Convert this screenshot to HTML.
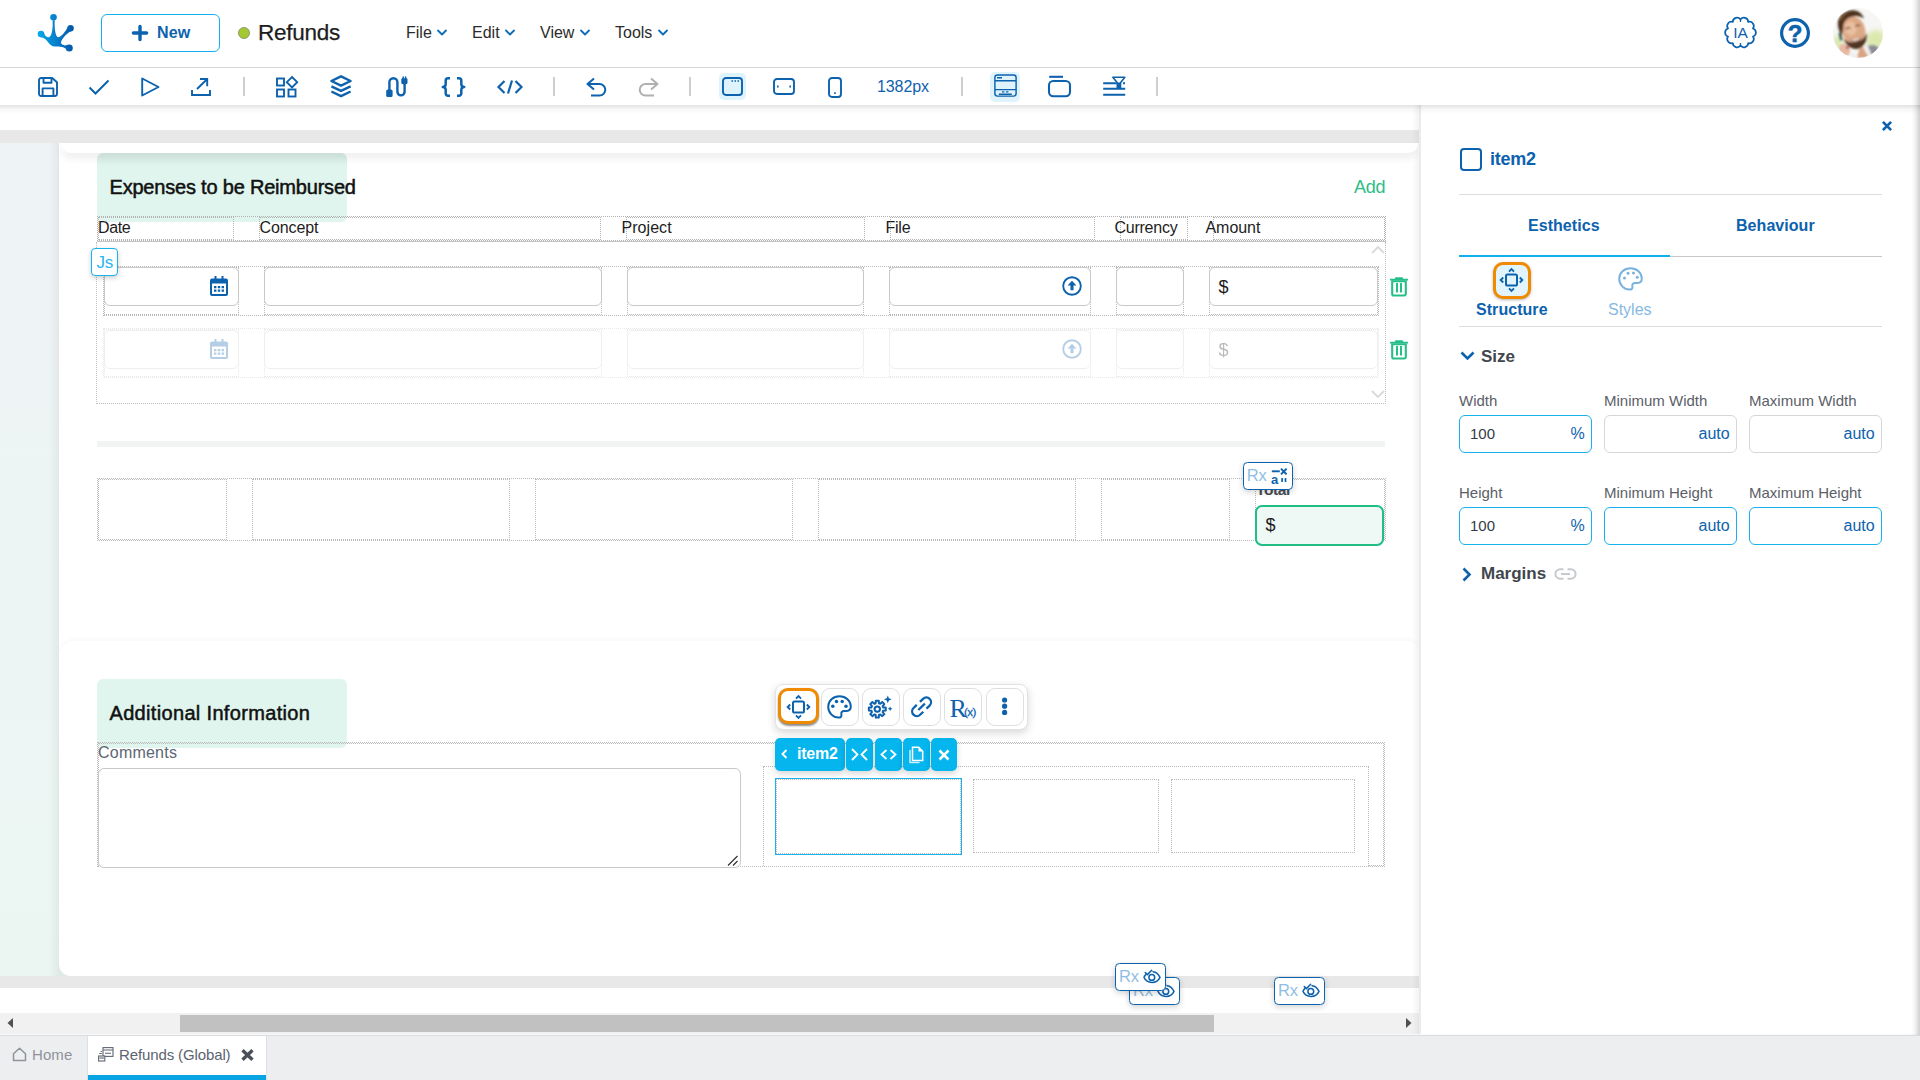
<!DOCTYPE html>
<html lang="en">
<head>
<meta charset="utf-8">
<title>Refunds</title>
<style>
*{box-sizing:border-box;margin:0;padding:0}
html,body{width:1920px;height:1080px;overflow:hidden;background:#fff}
body{font-family:"Liberation Sans",sans-serif;color:#222;position:relative}
.abs{position:absolute}
svg{display:block;position:absolute;overflow:visible}
.t{position:absolute;white-space:nowrap;line-height:1}
/* ---------- header ---------- */
#hdr{left:0;top:0;width:1920px;height:68px;background:#fff;border-bottom:1px solid #d3d8dd}
#newbtn{left:101px;top:14px;width:119px;height:38px;border:1px solid #12b0ee;border-radius:6px;background:#fff}
.menu{font-size:16px;color:#2b2b2b;top:25px}
/* ---------- toolbar ---------- */
#tb{left:0;top:68px;width:1920px;height:37px;background:#fff}
#tbshadow{z-index:5;left:0;top:105px;width:1920px;height:9px;background:linear-gradient(rgba(0,0,0,.115),rgba(0,0,0,.035) 45%,rgba(0,0,0,0))}
.sep{width:2px;height:19px;top:77px;background:#cfcfcf}
/* ---------- canvas ---------- */
#canvas{left:0;top:105px;width:1419px;height:929px;overflow:hidden}
.dot{position:absolute;border:1px dotted #b9b9b9}
.inp{position:absolute;border:1px solid #c9c9c9;border-radius:6px;background:#fff}
.h16{font-size:16px;color:#1d1d1d}
.rx{width:51px;height:28px;border:1.300px solid #0d62ae;border-radius:4.500px;background:#fff;box-shadow:0 2px 6px rgba(0,0,0,.18)}
.rxt{font-size:16.500px;color:#8fbee4;letter-spacing:-.2px}
.bb{top:738px;height:33px;background:#05b5ee;border-radius:5px;box-shadow:0 3px 6px rgba(0,0,0,.16)}
.fb{top:687.500px;width:37.500px;height:38px;border:1.200px solid #dddfe2;border-radius:9px;background:#fff}
/* ---------- panel ---------- */
#panel{left:1420px;top:105px;width:500px;height:930px;background:#fff}
.pl{font-size:15px;color:#5b6068}
.pin{position:absolute;height:38px;width:132.600px;border-radius:6px;background:#fff;border:1px solid #d6d6d6}
.pin.on{border:1.300px solid #17b1ee}
.auto{font-size:16px;color:#0d62ae}
/* ---------- bottom ---------- */
#bot{left:0;top:1035px;width:1920px;height:45px;background:#edeef0;border-top:1px solid #d9dcdf}
</style>
</head>
<body>
<div id="hdr" class="abs">
  <svg style="left:30px;top:8px" width="54" height="50" viewBox="0 0 54 50">
    <defs><linearGradient id="lg" x1="8" y1="0" x2="43" y2="0" gradientUnits="userSpaceOnUse"><stop offset="0" stop-color="#04aaeb"/><stop offset=".5" stop-color="#0580cb"/><stop offset="1" stop-color="#0458a8"/></linearGradient></defs>
    <g fill="url(#lg)">
      <circle cx="23.5" cy="9.3" r="3.3"/><circle cx="40.6" cy="20.3" r="3.2"/><circle cx="11" cy="26" r="3.3"/><circle cx="39.3" cy="40" r="3.5"/>
      <path d="M13.6 24.2C15 28 17 29.6 19 29.2C22 28.4 23 20 22.6 12.2L24.8 12.2C24.2 20 25.5 29 28 29.2C31 29.3 35 24 38.4 18.2L41.5 23C36 25.5 31 32 31 34.6C31.2 37 35 38.2 37.5 36.8L37.5 42.8C35 38.8 30 38.6 25 38.6C18.5 38.5 17.5 29.5 10.5 29.2Z"/>
    </g>
  </svg>
  <div id="newbtn" class="abs"></div>
  <svg style="left:132px;top:25px" width="16" height="16" viewBox="0 0 16 16"><path d="M8 1.4v13.2M1.4 8h13.2" stroke="#0d62ae" stroke-width="3.400" stroke-linecap="round" fill="none"/></svg>
  <div class="t" style="left:157px;top:25px;font-size:16px;font-weight:700;color:#0d62ae;letter-spacing:.2px">New</div>
  <div class="abs" style="left:238px;top:27px;width:12px;height:12px;border-radius:50%;background:#a3c830;border:1px solid #8e9a6e"></div>
  <div class="t" style="left:258px;top:21.5px;font-size:22.5px;color:#1d1d1d;letter-spacing:-.25px;-webkit-text-stroke:.25px #1d1d1d">Refunds</div>
  <div class="t menu" style="left:406px">File</div>
  <div class="t menu" style="left:472px">Edit</div>
  <div class="t menu" style="left:540px">View</div>
  <div class="t menu" style="left:615px">Tools</div>
  <svg style="left:437px;top:29px" width="10" height="8" viewBox="0 0 10 8"><path d="M1 1.5l4 4 4-4" stroke="#0d6cb8" stroke-width="1.8" fill="none" stroke-linecap="round" stroke-linejoin="round"/></svg>
  <svg style="left:505px;top:29px" width="10" height="8" viewBox="0 0 10 8"><path d="M1 1.5l4 4 4-4" stroke="#0d6cb8" stroke-width="1.8" fill="none" stroke-linecap="round" stroke-linejoin="round"/></svg>
  <svg style="left:580px;top:29px" width="10" height="8" viewBox="0 0 10 8"><path d="M1 1.5l4 4 4-4" stroke="#0d6cb8" stroke-width="1.8" fill="none" stroke-linecap="round" stroke-linejoin="round"/></svg>
  <svg style="left:658px;top:29px" width="10" height="8" viewBox="0 0 10 8"><path d="M1 1.5l4 4 4-4" stroke="#0d6cb8" stroke-width="1.8" fill="none" stroke-linecap="round" stroke-linejoin="round"/></svg>
  <!-- right icons -->
  <svg id="iaicon" style="left:1724px;top:16px" width="33" height="33" viewBox="0 0 33 33"><path d="M16.50 3.40A4.26 4.26 0 0 1 24.20 5.90A4.26 4.26 0 0 1 28.96 12.45A4.26 4.26 0 0 1 28.96 20.55A4.26 4.26 0 0 1 24.20 27.10A4.26 4.26 0 0 1 16.50 29.60A4.26 4.26 0 0 1 8.80 27.10A4.26 4.26 0 0 1 4.04 20.55A4.26 4.26 0 0 1 4.04 12.45A4.26 4.26 0 0 1 8.80 5.90A4.26 4.26 0 0 1 16.50 3.40Z" fill="#fff" stroke="#0d62ae" stroke-width="1.7" stroke-linejoin="round"/><path d="M16.5 3.4v2.6M16.5 29.6v-2.600" stroke="#0d62ae" stroke-width="1.300"/><text x="16.5" y="21.800" text-anchor="middle" font-family="Liberation Sans, sans-serif" font-size="15.500" fill="#0d62ae">IA</text></svg>
  <svg style="left:1779px;top:17px" width="32" height="32" viewBox="0 0 32 32"><circle cx="16" cy="16" r="13.4" fill="none" stroke="#0d62ae" stroke-width="3.200"/><text x="16" y="24.600" text-anchor="middle" font-family="Liberation Sans, sans-serif" font-weight="700" font-size="24" fill="#0d62ae" stroke="#0d62ae" stroke-width=".6">?</text></svg>
  <svg id="avatar" style="left:1833px;top:8px" width="50" height="50" viewBox="0 0 50 50">
    <defs><clipPath id="avc"><circle cx="25" cy="25" r="25"/></clipPath><filter id="avb" x="-20%" y="-20%" width="140%" height="140%"><feGaussianBlur stdDeviation="1"/></filter><filter id="avb2" x="-30%" y="-30%" width="160%" height="160%"><feGaussianBlur stdDeviation="2.400"/></filter></defs>
    <g clip-path="url(#avc)">
      <rect width="50" height="50" fill="#f6f6f5"/>
      <g filter="url(#avb2)"><ellipse cx="43" cy="32" rx="10" ry="10" fill="#dbe8ab"/><ellipse cx="38" cy="40" rx="8" ry="6" fill="#e0ebb8"/><ellipse cx="4" cy="35" rx="6" ry="7" fill="#dbe8ae"/></g>
      <g filter="url(#avb)">
        <path d="M24 50L27 38l9 2 6 10z" fill="#d9a482"/>
        <path d="M33 38l8-1 9 5v8H38z" fill="#8b8c96"/>
        <path d="M30 39l4-3 5 12-3 2z" fill="#f3f0ef"/>
        <path d="M17 50l3-6 5 6z" fill="#f1eeee"/>
        <g transform="rotate(-14 20 22)">
          <ellipse cx="20.500" cy="23" rx="11.500" ry="15" fill="#dca986"/>
          <ellipse cx="18" cy="20" rx="6" ry="7" fill="#e9bf9f"/>
          <path d="M8.500 28c1 8 6 13.500 12 13.500s11-5.500 12-13.500c-3 5-7 6.500-12 6.500s-9-1.500-12-6.500z" fill="#4d3424"/>
          <path d="M14.500 30.500c2 1.400 10 1.400 12 0-1 3-3.500 4.200-6 4.200s-5-1.200-6-4.200z" fill="#7a4b38"/>
          <path d="M15.500 30.800c2 .9 8 .9 10 0-1 1.700-2.800 2.300-5 2.300s-4-.600-5-2.300z" fill="#f4ebe6"/>
          <path d="M13 19.500c1.500-1.200 3.500-1.200 5 0M23 19.500c1.500-1.200 3.500-1.200 5 0" stroke="#5b3b28" stroke-width="1.300" fill="none"/>
          <path d="M7.500 25C4 13 8 3.500 19 2.500c8-.7 13.500 3.500 14.500 11-3.500-4-7.500-5.200-12.500-4.700-5.500.5-9 3.700-10 9.200z" fill="#4d321f"/>
          <path d="M9 8.500c3-4 9-5.500 14-4.500-5 0-9 2-11.500 5.500z" fill="#7d5434"/>
        </g>
        <rect x="6.200" y="24.500" width="2.600" height="8" rx="1" transform="rotate(-12 7.500 28)" fill="#2d5a4c"/>
        <ellipse cx="11.500" cy="42" rx="5.500" ry="6.500" transform="rotate(-25 11.500 42)" fill="#e7b9a2"/>
        <ellipse cx="14.500" cy="39.500" rx="1.300" ry="1.700" fill="#b4524c"/>
      </g>
    </g>
  </svg>
</div>

<div id="tb" class="abs"></div>
<div id="tbshadow" class="abs"></div>
<div id="tbicons">
  <!-- save -->
  <svg style="left:38px;top:77px" width="20" height="20" viewBox="0 0 20 20" fill="none" stroke="#0d62ae" stroke-width="1.900" stroke-linejoin="round"><path d="M1 3.200a2.200 2.200 0 0 1 2.200-2.200h11l4.800 4.200v11.600a2.200 2.200 0 0 1-2.200 2.200h-13.600a2.200 2.200 0 0 1-2.200-2.200z"/><path d="M5.500 1.200v4.600h8v-4.600M4.600 18.800v-7.400h10.800v7.400"/></svg>
  <!-- check -->
  <svg style="left:88px;top:79px" width="22" height="16" viewBox="0 0 22 16" fill="none" stroke="#0d62ae" stroke-width="2"><path d="M1.500 8.500l6 6L20.500 1.500"/></svg>
  <!-- play -->
  <svg style="left:141px;top:77px" width="19" height="20" viewBox="0 0 19 20" fill="none" stroke="#0d62ae" stroke-width="1.900" stroke-linejoin="round"><path d="M1.200 1.500L17.500 10 1.200 18.500z"/></svg>
  <!-- export -->
  <svg style="left:191px;top:78px" width="20" height="18" viewBox="0 0 20 18" fill="none" stroke="#0d62ae" stroke-width="1.900"><path d="M1 12v5h18v-5M6 11L16 1.200M9 1h7.200v7.200"/></svg>
  <div class="abs sep" style="left:243px"></div>
  <!-- widgets -->
  <svg style="left:276px;top:76px" width="22" height="22" viewBox="0 0 22 22" fill="none" stroke="#0d62ae" stroke-width="1.900"><rect x="1" y="2.500" width="7" height="7"/><rect x="1" y="13.500" width="7" height="7"/><rect x="12.500" y="13.500" width="7" height="7"/><path d="M16 1l5.200 5.200L16 11.400 10.800 6.200z"/></svg>
  <!-- layers -->
  <svg style="left:330px;top:75px" width="22" height="23" viewBox="0 0 22 23" fill="none" stroke="#0d62ae" stroke-width="2.400" stroke-linejoin="round"><path d="M11 1.400L20.600 6 11 10.600 1.400 6z"/><path d="M1.400 11.300L11 15.900l9.600-4.600M1.400 16.500L11 21.100l9.600-4.600"/></svg>
  <!-- route -->
  <svg style="left:385px;top:76px" width="23" height="22" viewBox="0 0 23 22" fill="none" stroke="#0d62ae" stroke-width="2.400" stroke-linecap="round"><path d="M4.400 14V6.200a4 4 0 0 1 8 0v9.600a3.600 3.600 0 0 0 7.200 0V7.500"/><rect x="1.200" y="13.400" width="6.400" height="7.600" rx="1.600" fill="#0d62ae" stroke="none"/><rect x="16.300" y="2.200" width="6.200" height="6" rx="1.400" fill="#0d62ae" stroke="none"/><path d="M18.200 1v2M20.600 1v2" stroke-width="1.500"/></svg>
  <!-- braces -->
  <svg style="left:441px;top:77px" width="25" height="20" viewBox="0 0 25 20" fill="none" stroke="#0d62ae" stroke-width="2.500" stroke-linejoin="round"><path d="M9 1.300H7a2.300 2.300 0 0 0-2.300 2.300v3.400c0 1.600-1 3-2.900 3 1.900 0 2.900 1.400 2.900 3v3.400a2.300 2.300 0 0 0 2.300 2.300h2M16 1.300h2a2.300 2.300 0 0 1 2.300 2.300v3.400c0 1.600 1 3 2.900 3-1.900 0-2.900 1.400-2.900 3v3.400a2.300 2.300 0 0 1-2.300 2.300h-2"/></svg>
  <!-- code -->
  <svg style="left:497px;top:79px" width="26" height="16" viewBox="0 0 26 16" fill="none" stroke="#0d62ae" stroke-width="2.200"><path d="M7.500 2L1.500 8l6 6M18.500 2l6 6-6 6M15 1.500l-4 13"/></svg>
  <div class="abs sep" style="left:553px"></div>
  <!-- undo -->
  <svg style="left:586px;top:77px" width="22" height="20" viewBox="0 0 22 20" fill="none" stroke="#0d62ae" stroke-width="2" stroke-linejoin="round"><path d="M8 1.500L1.500 7 8 12.500M2 7h11.500a5.800 5.800 0 0 1 0 11.600H5"/></svg>
  <!-- redo -->
  <svg style="left:637px;top:77px" width="22" height="20" viewBox="0 0 22 20" fill="none" stroke="#b0b0b0" stroke-width="2" stroke-linejoin="round"><path d="M14 1.500L20.500 7 14 12.500M20 7H8.500a5.800 5.800 0 0 0 0 11.600H17"/></svg>
  <div class="abs sep" style="left:689px"></div>
  <!-- desktop (active) -->
  <div class="abs" style="left:719px;top:73px;width:27px;height:27px;border-radius:5px;background:#dff3fc"></div>
  <svg style="left:722px;top:77px" width="21" height="19" viewBox="0 0 21 19" fill="none" stroke="#0d62ae" stroke-width="1.900"><rect x="1" y="1" width="19" height="17" rx="3"/><path d="M9.500 4h1.500M12.500 4h1.500M15.500 4h1.500" stroke-width="1.400"/></svg>
  <!-- tablet -->
  <svg style="left:773px;top:78px" width="22" height="17" viewBox="0 0 22 17" fill="none" stroke="#0d62ae" stroke-width="1.900"><rect x="1" y="1" width="20" height="15" rx="3"/><path d="M4 8.500h1.600M16.400 8.500h1.600" stroke-width="1.800"/></svg>
  <!-- phone -->
  <svg style="left:828px;top:77px" width="14" height="21" viewBox="0 0 14 21" fill="none" stroke="#0d62ae" stroke-width="1.900"><rect x="1" y="1" width="12" height="19" rx="3"/><path d="M6.200 16.200h1.600" stroke-width="1.800"/></svg>
  <div class="t" style="left:877px;top:79px;font-size:16px;color:#0d62ae;letter-spacing:-.1px">1382px</div>
  <div class="abs sep" style="left:961px"></div>
  <!-- layout (active) -->
  <div class="abs" style="left:990px;top:72px;width:30px;height:30px;border-radius:5px;background:#dff3fc"></div>
  <svg style="left:994px;top:74px" width="23" height="23" viewBox="0 0 23 23" fill="none" stroke="#0d62ae" stroke-width="1.450"><rect x=".900" y=".900" width="21.200" height="21.200" rx="2.600"/><path d="M1 6.700h21M1 15.600h21"/><path d="M3 3.800h5M4.800 20.200h13" stroke-width="1.500"/><path d="M8 17.900h2.400M12 17.900h2.400" stroke-width="1.300"/></svg>
  <!-- folder-tab -->
  <svg style="left:1047px;top:75px" width="25" height="23" viewBox="0 0 25 23" fill="none" stroke="#0d62ae" stroke-width="2.100"><path d="M2.200 1.800h13.800"/><rect x="2" y="6" width="21" height="15.300" rx="4.200"/></svg>
  <!-- filter-lines -->
  <svg style="left:1102px;top:76px" width="24" height="21" viewBox="0 0 24 21" fill="none" stroke="#0d62ae" stroke-width="2"><path d="M1.200 7.300h13.500M21 7.300h2M1.200 12.800h22M1.200 18.800h22"/><path d="M10.800 1.300h12l-4.300 5.400v5.600h-3.200V6.700z" stroke-width="1.600" stroke-linejoin="round" fill="#fff"/><path d="M16.900 6.500v5.500" stroke-width="2.400"/></svg>
  <div class="abs sep" style="left:1156px"></div>
</div>

<div id="canvas" class="abs">
<!-- coordinates inside are page coords minus (0,105) -->
<div class="abs" style="left:0;top:-105px;width:1419px;height:1140px">
  <!-- grey bands -->
  <div class="abs" style="left:0;top:130px;width:1419px;height:13px;background:#e8e8e8"></div>
  <div class="abs" style="left:0;top:976px;width:1419px;height:12px;background:#e8e8e8"></div>
  <!-- left strip -->
  <div class="abs" style="left:0;top:143px;width:90px;height:833px;background:linear-gradient(90deg,rgba(0,0,0,0) 0,rgba(0,0,0,0) 49px,rgba(0,0,0,.05) 59px,rgba(0,0,0,.045) 100%),linear-gradient(180deg,#eef3f5 0,#edf5f4 55%,#ebf6f2 100%)"></div>
  <!-- page -->
  <div class="abs" style="left:59px;top:143px;width:1360px;height:833px;background:#fff;border-radius:0 0 0 12px"></div>
  <!-- previous card bottom -->
  <div class="abs" style="left:61px;top:143px;width:1357px;height:10px;background:#fff;border-radius:0 0 14px 14px;box-shadow:0 5px 9px rgba(0,0,0,.075);z-index:3"></div>
  <!-- second card top edge -->
  <div class="abs" style="left:59px;top:641px;width:1359px;height:60px;border-radius:16px 11px 0 0;box-shadow:0 -2px 5px rgba(0,0,0,.03);background:#fff;clip-path:inset(-12px 0 1px 0)"></div>

  <!-- SECTION 1 heading -->
  <div class="abs" style="left:97px;top:153px;width:250px;height:69px;background:#e0f5ee;border-radius:6px"></div>
  <div class="abs" style="left:97px;top:153px;width:250px;height:14px;border-radius:6px 6px 0 0;background:linear-gradient(rgba(0,0,0,.04),rgba(0,0,0,0))"></div>
  <div class="t" style="left:109.500px;top:177px;font-size:20px;color:#111;-webkit-text-stroke:.5px #111;letter-spacing:-.2px">Expenses to be Reimbursed</div>
  <div class="t" style="left:1354px;top:178px;font-size:18px;color:#2dbd86;letter-spacing:-.2px">Add</div>

  <!-- header row -->
  <div class="dot" style="left:97px;top:216px;width:1289px;height:25px;border-color:#b2b2b2;"></div>
  <div class="dot" style="left:98px;top:217px;width:136px;height:23px;border-color:#b2b2b2;"></div>
  <div class="dot" style="left:259px;top:217px;width:342px;height:23px;border-color:#b2b2b2;"></div>
  <div class="dot" style="left:626px;top:217px;width:239px;height:23px;border-color:#b2b2b2;"></div>
  <div class="dot" style="left:890px;top:217px;width:205px;height:23px;border-color:#b2b2b2;"></div>
  <div class="dot" style="left:1120px;top:217px;width:68px;height:23px;border-color:#b2b2b2;"></div>
  <div class="dot" style="left:1213px;top:217px;width:172px;height:23px;border-color:#b2b2b2;"></div>
  <div class="abs" style="left:97px;top:241px;width:1289px;height:1px;background:#c6c6c6"></div>
  <div class="t h16" style="left:98px;top:220px;letter-spacing:-.35px">Date</div>
  <div class="t h16" style="left:259.500px;top:220px;letter-spacing:-.1px">Concept</div>
  <div class="t h16" style="left:621.500px;top:220px;letter-spacing:.05px">Project</div>
  <div class="t h16" style="left:885.500px;top:220px;letter-spacing:-.25px">File</div>
  <div class="t h16" style="left:1114.500px;top:220px;letter-spacing:-.25px">Currency</div>
  <div class="t h16" style="left:1205.500px;top:220px;letter-spacing:-.05px">Amount</div>

  <!-- rows container -->
  <div class="dot" style="left:96px;top:242px;width:1290px;height:162px;border-color:#c0c0c0;border-top:none"></div>
  <!-- row 1 -->
  <div id="row1">
    <div class="dot" style="left:103px;top:266px;width:1276px;height:50px;border-color:#bababa;"></div>
  <div class="dot" style="left:104px;top:267px;width:135px;height:48px;border-color:#bababa;"></div>
  <div class="dot" style="left:264px;top:267px;width:338px;height:48px;border-color:#bababa;"></div>
  <div class="dot" style="left:627px;top:267px;width:237px;height:48px;border-color:#bababa;"></div>
  <div class="dot" style="left:889px;top:267px;width:202px;height:48px;border-color:#bababa;"></div>
  <div class="dot" style="left:1116px;top:267px;width:68px;height:48px;border-color:#bababa;"></div>
  <div class="dot" style="left:1209px;top:267px;width:169px;height:48px;border-color:#bababa;"></div>
    <div class="inp" style="left:104px;top:267px;width:135px;height:39px"></div>
    <div class="inp" style="left:264px;top:267px;width:338px;height:39px"></div>
    <div class="inp" style="left:627px;top:267px;width:237px;height:39px"></div>
    <div class="inp" style="left:889px;top:267px;width:202px;height:39px"></div>
    <div class="inp" style="left:1116px;top:267px;width:68px;height:39px"></div>
    <div class="inp" style="left:1209px;top:267px;width:169px;height:39px"></div>
    <svg style="left:210px;top:276px" width="18" height="20" viewBox="0 0 18 20"><path d="M4.500 0h2v2.500h5V0h2v2.500H16A2 2 0 0 1 18 4.500V18a2 2 0 0 1-2 2H2a2 2 0 0 1-2-2V4.500A2 2 0 0 1 2 2.500h2.500zM2 7.500V18h14V7.500z" fill="#0c61ae"/><path d="M4 10h2.400v2.200H4zM7.800 10h2.400v2.200H7.800zM11.600 10h2.400v2.200h-2.400zM4 13.600h2.400v2.200H4zM7.800 13.600h2.400v2.200H7.800zM11.600 13.600h2.400v2.200h-2.400z" fill="#0c61ae"/></svg>
    <svg style="left:1062px;top:276px" width="20" height="20" viewBox="0 0 20 20"><circle cx="10" cy="10" r="8.800" fill="none" stroke="#0c61ae" stroke-width="1.900"/><path d="M10 4.800l4.400 4.700h-2.900v4.800h-3V9.500H5.600z" fill="#0c61ae"/></svg>
    <div class="t" style="left:1218.500px;top:278px;font-size:18px;color:#1c1c1c">$</div>
  </div>
  <!-- row 2 (faded) -->
  <div id="row2" style="opacity:.3">
    <div class="dot" style="left:103px;top:328px;width:1276px;height:50px;border-color:#bababa;"></div>
  <div class="dot" style="left:104px;top:329px;width:135px;height:48px;border-color:#bababa;"></div>
  <div class="dot" style="left:264px;top:329px;width:338px;height:48px;border-color:#bababa;"></div>
  <div class="dot" style="left:627px;top:329px;width:237px;height:48px;border-color:#bababa;"></div>
  <div class="dot" style="left:889px;top:329px;width:202px;height:48px;border-color:#bababa;"></div>
  <div class="dot" style="left:1116px;top:329px;width:68px;height:48px;border-color:#bababa;"></div>
  <div class="dot" style="left:1209px;top:329px;width:169px;height:48px;border-color:#bababa;"></div>
    <div class="inp" style="left:104px;top:330px;width:135px;height:39px"></div>
    <div class="inp" style="left:264px;top:330px;width:338px;height:39px"></div>
    <div class="inp" style="left:627px;top:330px;width:237px;height:39px"></div>
    <div class="inp" style="left:889px;top:330px;width:202px;height:39px"></div>
    <div class="inp" style="left:1116px;top:330px;width:68px;height:39px"></div>
    <div class="inp" style="left:1209px;top:330px;width:169px;height:39px"></div>
    <svg style="left:210px;top:339px" width="18" height="20" viewBox="0 0 18 20"><path d="M4.500 0h2v2.500h5V0h2v2.500H16A2 2 0 0 1 18 4.500V18a2 2 0 0 1-2 2H2a2 2 0 0 1-2-2V4.500A2 2 0 0 1 2 2.500h2.500zM2 7.500V18h14V7.500z" fill="#0c61ae"/><path d="M4 10h2.400v2.200H4zM7.800 10h2.400v2.200H7.800zM11.600 10h2.400v2.200h-2.400zM4 13.600h2.400v2.200H4zM7.800 13.600h2.400v2.200H7.800zM11.600 13.600h2.400v2.200h-2.400z" fill="#0c61ae"/></svg>
    <svg style="left:1062px;top:339px" width="20" height="20" viewBox="0 0 20 20"><circle cx="10" cy="10" r="8.800" fill="none" stroke="#0c61ae" stroke-width="1.900"/><path d="M10 4.800l4.400 4.700h-2.900v4.800h-3V9.500H5.600z" fill="#0c61ae"/></svg>
    <div class="t" style="left:1218.500px;top:341px;font-size:18px;color:#1c1c1c">$</div>
  </div>
  <!-- trash icons -->
  <svg class="trash" style="left:1390px;top:277px" width="18" height="20" viewBox="0 0 18 20"><path d="M5.500 .300h7l.800 1.400H18v1.700H0V1.700h4.700z" fill="#27bf89"/><path d="M2.200 4.200h13.600V17a1.500 1.500 0 0 1-1.500 1.500H3.700A1.500 1.500 0 0 1 2.200 17z" fill="none" stroke="#27bf89" stroke-width="2.100"/><path d="M7 6v9.500M11 6v9.500" stroke="#27bf89" stroke-width="2"/></svg>
  <svg class="trash" style="left:1390px;top:340px" width="18" height="20" viewBox="0 0 18 20"><path d="M5.500 .300h7l.800 1.400H18v1.700H0V1.700h4.700z" fill="#27bf89"/><path d="M2.200 4.200h13.600V17a1.500 1.500 0 0 1-1.500 1.500H3.700A1.500 1.500 0 0 1 2.200 17z" fill="none" stroke="#27bf89" stroke-width="2.100"/><path d="M7 6v9.500M11 6v9.500" stroke="#27bf89" stroke-width="2"/></svg>
  <!-- scroll chevrons -->
  <svg style="left:1371px;top:245px" width="14" height="9" viewBox="0 0 14 9"><path d="M1 8l6-6 6 6" stroke="#d9d9d9" stroke-width="1.800" fill="none"/></svg>
  <svg style="left:1371px;top:390px" width="14" height="9" viewBox="0 0 14 9"><path d="M1 1l6 6 6-6" stroke="#d9d9d9" stroke-width="1.800" fill="none"/></svg>
  <!-- Js badge -->
  <div class="abs" style="left:91px;top:248px;width:27px;height:28px;border:1px solid #19b2ee;border-radius:4px;background:#fff;box-shadow:0 2px 5px rgba(0,0,0,.2)"></div>
  <div class="t" style="left:96.500px;top:254px;font-size:17px;color:#2ab5ef;letter-spacing:-.3px">Js</div>

  <!-- separator -->
  <div class="abs" style="left:97px;top:441px;width:1288px;height:6px;background:#f2f3f3"></div>

  <!-- totals row -->
  <div class="dot" style="left:97px;top:478px;width:1289px;height:63px;border-color:#bababa;"></div>
  <div class="dot" style="left:98px;top:479px;width:129px;height:61px;border-color:#bababa;"></div>
  <div class="dot" style="left:252px;top:479px;width:258px;height:61px;border-color:#bababa;"></div>
  <div class="dot" style="left:535px;top:479px;width:258px;height:61px;border-color:#bababa;"></div>
  <div class="dot" style="left:818px;top:479px;width:258px;height:61px;border-color:#bababa;"></div>
  <div class="dot" style="left:1101px;top:479px;width:129px;height:61px;border-color:#bababa;"></div>
  <div class="dot" style="left:1255px;top:479px;width:130px;height:61px;border-color:#bababa;"></div>
  <div class="t" style="left:1256px;top:482px;font-size:15.500px;font-weight:700;color:#474c54;letter-spacing:-.4px">Total</div>
  <div class="abs" style="left:1255px;top:505px;width:129px;height:41px;border:2px solid #1fbe84;border-radius:7px;background:#eef9f5"></div>
  <div class="t" style="left:1265.500px;top:516px;font-size:18px;color:#1c1c1c">$</div>
  <!-- Rx badge -->
  <div class="abs rx" style="left:1243px;top:462px;width:50px"></div>
  <div class="t rxt" style="left:1246.700px;top:466.700px">Rx</div>
  <svg style="left:1270px;top:466px" width="20" height="20" viewBox="0 0 20 20" fill="none" stroke="#0d62ae"><path d="M1.800 5.300h8" stroke-width="1.900"/><path d="M11 2.600l5.600 5.800M16.600 2.600L11 8.400" stroke-width="2"/><path d="M12.100 12v4M15.500 12v4" stroke-width="1.700"/><text x="1" y="17.600" font-family="Liberation Sans, sans-serif" font-weight="700" font-size="13" fill="#0d62ae" stroke="none">a</text></svg>

  <!-- SECTION 2 heading -->
  <div class="abs" style="left:97px;top:679px;width:250px;height:69px;background:#e0f5ee;border-radius:6px"></div>
  <div class="t" style="left:109.500px;top:703px;font-size:20px;color:#111;-webkit-text-stroke:.5px #111;letter-spacing:.33px">Additional Information</div>
  <!-- outer container -->
  <div class="dot" style="left:97px;top:742px;width:1288px;height:125px;border-color:#bababa"></div>
  <div class="dot" style="left:98px;top:743px;width:1286px;height:123px;border-color:#bababa;border-bottom:none"></div>
  <div class="dot" style="left:1369px;top:865px;width:15px;height:1px;border:none;border-top:1px dotted #bababa"></div>
  <div class="t" style="left:98px;top:745px;font-size:16px;color:#5d6673;letter-spacing:.22px">Comments</div>
  <div class="inp" style="left:98px;top:768px;width:643px;height:100px"></div>
  <svg style="left:727px;top:855px" width="11" height="11" viewBox="0 0 11 11" stroke="#333" stroke-width="1.200"><path d="M1 10.500L10.500 1M6 10.500L10.500 6"/></svg>
  <!-- inner container -->
  <div class="dot" style="left:763px;top:766px;width:606px;height:100px;border-bottom:none"></div>
  <div class="abs" style="left:775px;top:778px;width:187px;height:77px;border:1px solid #19b2ee;outline:1px dotted #bbb;outline-offset:-2px"></div>
  <div class="dot" style="left:973px;top:779px;width:186px;height:74px"></div>
  <div class="dot" style="left:1171px;top:779px;width:184px;height:74px"></div>

  <!-- blue item bar -->
  <div class="abs bb" style="left:775px;width:70px"></div>
  <div class="abs bb" style="left:846px;width:27px"></div>
  <div class="abs bb" style="left:875px;width:27px"></div>
  <div class="abs bb" style="left:903px;width:27px"></div>
  <div class="abs bb" style="left:931px;width:26px"></div>
  <svg style="left:781px;top:749px" width="7" height="10" viewBox="0 0 7 10"><path d="M5.500 1L1.500 5l4 4" stroke="#fff" stroke-width="1.900" fill="none"/></svg>
  <div class="t" style="left:797px;top:746px;font-size:16px;font-weight:700;color:#fff;letter-spacing:-.2px">item2</div>
  <svg style="left:851px;top:748px" width="17" height="13" viewBox="0 0 17 13" fill="none" stroke="#fff" stroke-width="1.800"><path d="M1 1l5.500 5.500L1 12M16 1l-5.500 5.500L16 12"/></svg>
  <svg style="left:880px;top:749px" width="17" height="11" viewBox="0 0 17 11" fill="none" stroke="#fff" stroke-width="1.800"><path d="M6.500 1L1.500 5.500l5 4.500M10.500 1l5 4.500-5 4.500"/></svg>
  <svg style="left:909px;top:746px" width="15" height="18" viewBox="0 0 15 18" fill="none" stroke="#fff" stroke-width="1.500"><path d="M3.500 1.200h6.200l4 4V14.500h-10.200z" fill="#fff" fill-opacity=".06"/><path d="M9.500 1.200v4.200h4.200" fill="#fff" stroke="none"/><path d="M1 4v12.500h9.500" stroke-opacity=".8"/></svg>
  <svg style="left:938px;top:749px" width="12" height="12" viewBox="0 0 12 12" fill="none" stroke="#fff" stroke-width="2.600"><path d="M1.500 1.500l9 9M10.500 1.500l-9 9"/></svg>

  <!-- floating toolbar -->
  <div class="abs" style="left:775px;top:684px;width:253px;height:46px;border:1px solid #e3e3e3;border-radius:8px;background:#fff;box-shadow:0 3px 8px rgba(0,0,0,.16)"></div>
  <div class="abs" style="left:778.400px;top:688px;width:40.400px;height:36px;border:3.700px solid #f08a00;border-radius:10px;background:#fff;box-shadow:0 1.500px 2px rgba(0,0,0,.45)"></div>
  <div class="abs fb" style="left:821px"></div>
  <div class="abs fb" style="left:862px"></div>
  <div class="abs fb" style="left:903px"></div>
  <div class="abs fb" style="left:944px"></div>
  <div class="abs fb" style="left:986px"></div>
  <!-- struct icon -->
  <svg style="left:787px;top:695px" width="24" height="24" viewBox="0 0 24 24"><rect x="6" y="6.500" width="11" height="11" rx="1.600" fill="none" stroke="#0d62ae" stroke-width="2"/><path d="M9 3.700L11.500 1.200 14 3.700M9 20.300l2.500 2.500 2.500-2.500M3.200 9.500L.700 12l2.500 2.500M19.800 9.500l2.500 2.500-2.500 2.500" fill="none" stroke="#0d62ae" stroke-width="1.900" stroke-linejoin="miter"/></svg>
  <!-- palette -->
  <svg id="pal1" style="left:827px;top:695px" width="25" height="24" viewBox="0 0 25 24"><path d="M12.500 1.200C6.200 1.200 1.200 5.800 1.200 11.800c0 5.800 4.600 10.800 10.400 10.800 2.200 0 3.200-1.300 2.800-3-.5-2.200.6-3.700 3-3.700h2.200c2.600 0 4.200-1.700 4.200-4.400C23.800 5.600 18.700 1.200 12.500 1.200z" fill="none" stroke="#0d62ae" stroke-width="2"/><circle cx="5.800" cy="11.200" r="1.750" fill="#0d62ae"/><circle cx="9.500" cy="6.500" r="1.750" fill="#0d62ae"/><circle cx="15.200" cy="6.500" r="1.750" fill="#0d62ae"/><circle cx="19" cy="11.200" r="1.750" fill="#0d62ae"/></svg>
  <!-- gear -->
  <svg id="gear1" style="left:867px;top:694px" width="26" height="26" viewBox="0 0 26 26"><path d="M16.18 13.47 L18.77 13.62 L18.77 16.58 L16.18 16.73 L15.61 18.11 L17.34 20.05 L15.25 22.14 L13.31 20.41 L11.93 20.98 L11.78 23.57 L8.82 23.57 L8.67 20.98 L7.29 20.41 L5.35 22.14 L3.26 20.05 L4.99 18.11 L4.42 16.73 L1.83 16.58 L1.83 13.62 L4.42 13.47 L4.99 12.09 L3.26 10.15 L5.35 8.06 L7.29 9.79 L8.67 9.22 L8.82 6.63 L11.78 6.63 L11.93 9.22 L13.31 9.79 L15.25 8.06 L17.34 10.15 L15.61 12.09Z" fill="none" stroke="#0d62ae" stroke-width="2" stroke-linejoin="round"/><circle cx="10.300" cy="15.100" r="2.700" fill="none" stroke="#0d62ae" stroke-width="2"/><path d="M20.80 1.40L21.89 4.21L24.70 5.30L21.89 6.39L20.80 9.20L19.71 6.39L16.90 5.30L19.71 4.21ZM23.10 12.30L23.80 14.10L25.60 14.80L23.80 15.50L23.10 17.30L22.40 15.50L20.60 14.80L22.40 14.10Z" fill="#0d62ae"/></svg>
  <!-- link -->
  <svg style="left:909px;top:694px" width="26" height="26" viewBox="0 0 26 26" fill="none" stroke="#0d62ae" stroke-width="2.300" stroke-linecap="butt"><g transform="rotate(-44 12.600 12.800)"><path d="M10.400 8.100H6a4.700 4.700 0 0 0 0 9.400h4.400M14.800 8.100h4.400a4.700 4.700 0 0 1 0 9.400h-4.400M8 12.800h9.200"/></g></svg>
  <!-- R(x) -->
  <div class="t" style="left:949.500px;top:696px;font-family:'Liberation Serif',serif;font-size:26px;color:#0d62ae">R</div>
  <div class="t" style="left:964px;top:706.500px;font-size:11.500px;color:#0d62ae;letter-spacing:-.5px;-webkit-text-stroke:.3px #0d62ae">(x)</div>
  <!-- dots -->
  <svg style="left:1001px;top:697px" width="8" height="20" viewBox="0 0 8 20" fill="#0d62ae"><circle cx="3.600" cy="3" r="2.600"/><circle cx="3.600" cy="9.200" r="2.600"/><circle cx="3.600" cy="15.400" r="2.600"/></svg>

  <!-- bottom Rx badges -->
  <div class="abs rx" style="left:1129px;top:977px"></div>
  <div class="t rxt" style="left:1133px;top:982.300px">Rx</div>
  <svg class="eye" style="left:1157px;top:983px" width="18" height="16" viewBox="0 0 18 16" fill="none" stroke="#0d62ae" stroke-width="1.500" stroke-linecap="round" stroke-linejoin="round"><path d="M2.800 5.600C1.800 6.500 1.200 7.500 1 8.400c3 6.600 13 6.800 16 0C15.400 4.800 12.500 3 10 2.700"/><circle cx="8.800" cy="8.400" r="2.900"/><path d="M2.300 3.600l2.100 2L8.700 1.300"/></svg>
  <div class="abs rx" style="left:1274px;top:977px"></div>
  <div class="t rxt" style="left:1278px;top:982.300px">Rx</div>
  <svg class="eye" style="left:1302px;top:983px" width="18" height="16" viewBox="0 0 18 16" fill="none" stroke="#0d62ae" stroke-width="1.500" stroke-linecap="round" stroke-linejoin="round"><path d="M2.800 5.600C1.800 6.500 1.200 7.500 1 8.400c3 6.600 13 6.800 16 0C15.400 4.800 12.500 3 10 2.700"/><circle cx="8.800" cy="8.400" r="2.900"/><path d="M2.300 3.600l2.100 2L8.700 1.300"/></svg>
  <div class="abs rx" style="left:1115px;top:963px"></div>
  <div class="t rxt" style="left:1119px;top:968.300px">Rx</div>
  <svg class="eye" style="left:1143px;top:969px" width="18" height="16" viewBox="0 0 18 16" fill="none" stroke="#0d62ae" stroke-width="1.500" stroke-linecap="round" stroke-linejoin="round"><path d="M2.800 5.600C1.800 6.500 1.200 7.500 1 8.400c3 6.600 13 6.800 16 0C15.400 4.800 12.500 3 10 2.700"/><circle cx="8.800" cy="8.400" r="2.900"/><path d="M2.300 3.600l2.100 2L8.700 1.300"/></svg>

  <!-- h scrollbar -->
  <div class="abs" style="left:0;top:1013px;width:1419px;height:22px;background:#f1f1f1"></div>
  <div class="abs" style="left:180px;top:1015px;width:1034px;height:17px;background:#c1c1c1"></div>
  <svg style="left:7px;top:1018px" width="7" height="10" viewBox="0 0 7 10"><path d="M6 0v10L.5 5z" fill="#505050"/></svg>
  <svg style="left:1405px;top:1018px" width="7" height="10" viewBox="0 0 7 10"><path d="M1 0v10L6.500 5z" fill="#505050"/></svg>
</div>
</div>

<div id="panel" class="abs">
<div class="abs" style="left:-1420px;top:-105px;width:1920px;height:1080px">
  <!-- left shadow of panel -->
  <div class="abs" style="left:1412px;top:105px;width:8px;height:930px;background:linear-gradient(90deg,rgba(0,0,0,0),rgba(0,0,0,.055))"></div>
  <div class="abs" style="left:1419px;top:105px;width:2px;height:930px;background:#e9ecec"></div>
  <!-- close -->
  <svg style="left:1882px;top:121px" width="10" height="10" viewBox="0 0 10 10"><path d="M.900 .900l8.200 8.200M9.100 .900L.900 9.100" stroke="#0d62ae" stroke-width="2.700" fill="none"/></svg>
  <!-- title -->
  <div class="abs" style="left:1460.300px;top:148.200px;width:22.200px;height:22.400px;border:2.700px solid #0d62ae;border-radius:4px"></div>
  <div class="t" style="left:1490px;top:150px;font-size:18px;font-weight:700;color:#0d62ae;letter-spacing:-.25px">item2</div>
  <div class="abs" style="left:1459px;top:194px;width:423px;height:1px;background:#dcdcdc"></div>
  <!-- tabs -->
  <div class="t" style="left:1528px;top:218px;font-size:16px;font-weight:700;color:#0d62ae;letter-spacing:.05px">Esthetics</div>
  <div class="t" style="left:1736px;top:218px;font-size:16px;font-weight:700;color:#0d62ae;letter-spacing:.05px">Behaviour</div>
  <div class="abs" style="left:1459px;top:255.500px;width:423px;height:1px;background:#c9c9c9"></div>
  <div class="abs" style="left:1459px;top:254.500px;width:211px;height:2.500px;background:#10b0ec"></div>
  <!-- Structure / Styles -->
  <div class="abs" style="left:1493.200px;top:261.500px;width:37.600px;height:37.600px;border:3.700px solid #f08a00;border-radius:10px;background:#e1f4fc;box-shadow:0 1px 3px rgba(0,0,0,.3)"></div>
  <svg style="left:1500px;top:268px" width="24" height="24" viewBox="0 0 24 24"><rect x="6" y="6.500" width="11" height="11" rx="1.600" fill="none" stroke="#0d62ae" stroke-width="2"/><path d="M9 3.700L11.500 1.200 14 3.700M9 20.300l2.500 2.500 2.500-2.500M3.200 9.500L.700 12l2.500 2.500M19.800 9.500l2.500 2.500-2.500 2.500" fill="none" stroke="#0d62ae" stroke-width="1.900" stroke-linejoin="miter"/></svg>
  <div class="t" style="left:1476px;top:301.500px;font-size:16px;font-weight:700;color:#0d62ae;letter-spacing:.05px">Structure</div>
  <svg style="left:1618px;top:267px" width="25" height="24" viewBox="0 0 25 24"><path d="M12.500 1.200C6.200 1.200 1.200 5.800 1.200 11.800c0 5.800 4.600 10.800 10.400 10.800 2.200 0 3.200-1.300 2.800-3-.5-2.200.6-3.700 3-3.700h2.200c2.600 0 4.200-1.700 4.200-4.400C23.800 5.600 18.700 1.200 12.500 1.200z" fill="none" stroke="#7ab2de" stroke-width="2"/><circle cx="6.500" cy="11" r="1.500" fill="#7ab2de"/><circle cx="10" cy="6.200" r="1.500" fill="#7ab2de"/><circle cx="15.500" cy="6" r="1.500" fill="#7ab2de"/><circle cx="19.200" cy="10.300" r="1.500" fill="#7ab2de"/></svg>
  <div class="t" style="left:1608px;top:301.500px;font-size:16px;color:#86b9e1">Styles</div>
  <div class="abs" style="left:1459px;top:326px;width:423px;height:1px;background:#dcdcdc"></div>
  <!-- Size -->
  <svg style="left:1460px;top:351px" width="15" height="10" viewBox="0 0 15 10"><path d="M1.500 1.500l6 6 6-6" stroke="#0d62ae" stroke-width="2.600" fill="none"/></svg>
  <div class="t" style="left:1481px;top:347.500px;font-size:17px;font-weight:700;color:#41464d">Size</div>
  <div class="t pl" style="left:1459px;top:393px">Width</div>
  <div class="t pl" style="left:1604px;top:393px">Minimum Width</div>
  <div class="t pl" style="left:1749px;top:393px">Maximum Width</div>
  <div class="pin on" style="left:1459px;top:415px"></div>
  <div class="pin" style="left:1604px;top:415px"></div>
  <div class="pin" style="left:1749px;top:415px"></div>
  <div class="t" style="left:1470px;top:426px;font-size:15px;color:#333b47">100</div>
  <div class="t auto" style="left:1570.500px;top:425.500px">%</div>
  <div class="t auto" style="left:1698.500px;top:425.500px">auto</div>
  <div class="t auto" style="left:1843.500px;top:425.500px">auto</div>
  <div class="t pl" style="left:1459px;top:485px">Height</div>
  <div class="t pl" style="left:1604px;top:485px">Minimum Height</div>
  <div class="t pl" style="left:1749px;top:485px">Maximum Height</div>
  <div class="pin on" style="left:1459px;top:507px"></div>
  <div class="pin on" style="left:1604px;top:507px"></div>
  <div class="pin on" style="left:1749px;top:507px"></div>
  <div class="t" style="left:1470px;top:518px;font-size:15px;color:#333b47">100</div>
  <div class="t auto" style="left:1570.500px;top:517.500px">%</div>
  <div class="t auto" style="left:1698.500px;top:517.500px">auto</div>
  <div class="t auto" style="left:1843.500px;top:517.500px">auto</div>
  <!-- Margins -->
  <svg style="left:1462px;top:567px" width="10" height="15" viewBox="0 0 10 15"><path d="M1.500 1.500l6 6-6 6" stroke="#0d62ae" stroke-width="2.600" fill="none"/></svg>
  <div class="t" style="left:1481px;top:565px;font-size:17px;font-weight:700;color:#41464d">Margins</div>
  <svg style="left:1554px;top:568px" width="23" height="12" viewBox="0 0 23 12" fill="none" stroke="#c6c9cd" stroke-width="2"><path d="M9.500 1.200H6.200a4.800 4.800 0 0 0 0 9.600h3.300M13.500 1.200h3.300a4.800 4.800 0 0 1 0 9.600h-3.300M7 6h9"/></svg>
</div>
</div>
<!-- right page edge shadow -->
<div class="abs" style="z-index:6;left:1911px;top:0;width:9px;height:1035px;background:linear-gradient(90deg,rgba(0,0,0,0),rgba(0,0,0,.04) 40%,rgba(0,0,0,.19))"></div>

<div class="abs" style="left:0;top:1034px;width:1920px;height:1px;background:#fafafa"></div>
<div id="bot" class="abs">
  <div class="abs" style="left:87px;top:0;width:180px;height:44px;background:#fff;border-left:1px solid #dde0e4;border-right:1px solid #dde0e4"></div>
  <div class="abs" style="left:88px;top:39px;width:178px;height:5px;background:#08a4e4"></div>
  <svg style="left:12px;top:11px" width="15" height="15" viewBox="0 0 15 15" fill="none" stroke="#8e939b" stroke-width="1.500" stroke-linejoin="round"><path d="M1.500 6.800L7.500 1.200l6 5.600v6.700H1.500z"/></svg>
  <div class="t" style="left:32px;top:10.500px;font-size:15px;color:#8e939b;letter-spacing:.1px">Home</div>
  <svg style="left:98px;top:11px" width="16" height="15" viewBox="0 0 16 15" fill="none" stroke="#5e6672" stroke-width="1.100"><rect x="5" y=".600" width="10" height="8.800"/><path d="M5 3h10M7 6.200h6M3.800 4.500H2.500M3.800 6.500H1.200"/><rect x=".600" y="9" width="6.200" height="5" fill="#fff"/><path d="M1.500 11h4.500"/></svg>
  <div class="t" style="left:119px;top:10.500px;font-size:15px;color:#5b6371;letter-spacing:-.12px">Refunds (Global)</div>
  <svg style="left:241px;top:13px" width="13" height="12" viewBox="0 0 13 12"><path d="M1.500 1.200l10 9.600M11.500 1.200l-10 9.600" stroke="#4a4f57" stroke-width="3.300" fill="none"/></svg>
</div>

</body>
</html>
